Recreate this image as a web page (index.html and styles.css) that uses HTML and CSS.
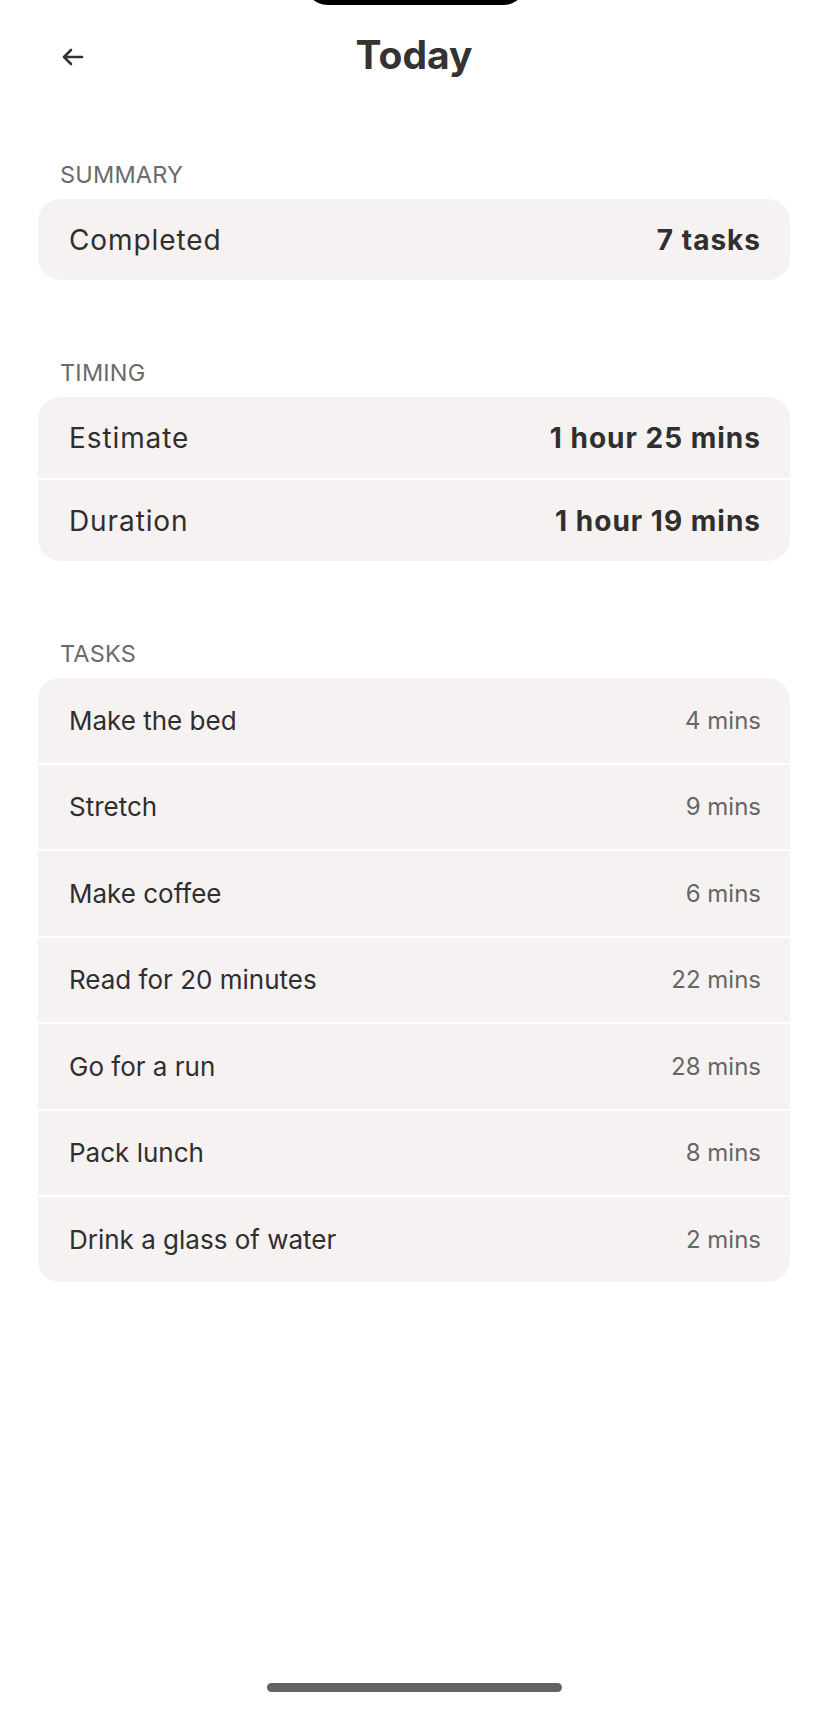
FILE: index.html
```html
<!DOCTYPE html>
<html lang="en">
<head>
  <meta charset="UTF-8" />
  <meta name="viewport" content="width=device-width, initial-scale=1.0"/>
  <title>Today</title>
  <link rel="stylesheet" href="styles.css">
</head>
<body>
  <div class="screen">
    <div class="notch"></div>

    <header class="topbar">
      <button class="back" aria-label="Back">
        <svg width="22" height="18" viewBox="0 0 22 18" fill="none" stroke="currentColor" stroke-width="2.6" stroke-linecap="round" stroke-linejoin="round">
          <path d="M20 9H3"/>
          <path d="M9 2L2 9l7 7"/>
        </svg>
      </button>
      <h1>Today</h1>
      <span></span>
    </header>

    <main class="content">
      <section class="group">
        <h2>Summary</h2>
        <div class="card">
          <div class="row">
            <span>Completed</span>
            <strong>7 tasks</strong>
          </div>
        </div>
      </section>

      <section class="group">
        <h2>Timing</h2>
        <div class="card">
          <div class="row">
            <span>Estimate</span>
            <strong>1 hour 25 mins</strong>
          </div>
          <div class="row">
            <span>Duration</span>
            <strong>1 hour 19 mins</strong>
          </div>
        </div>
      </section>

      <section class="group">
        <h2>Tasks</h2>
        <div class="card tasks">
          <div class="row"><span>Make the bed</span><em>4 mins</em></div>
          <div class="row"><span>Stretch</span><em>9 mins</em></div>
          <div class="row"><span>Make coffee</span><em>6 mins</em></div>
          <div class="row"><span>Read for 20 minutes</span><em>22 mins</em></div>
          <div class="row"><span>Go for a run</span><em>28 mins</em></div>
          <div class="row"><span>Pack lunch</span><em>8 mins</em></div>
          <div class="row"><span>Drink a glass of water</span><em>2 mins</em></div>
        </div>
      </section>
    </main>

    <div class="home-bar"></div>
  </div>
</body>
</html>
```

FILE: styles.css
```css
body {
  margin: 0;
  background-color: #fff;
  color: #2f2f2f;
  font-family: 'Inter', 'Noto Sans', sans-serif;
}
.screen {
  position: relative;
  min-height: 100vh;
  display: flex;
  flex-direction: column;
  overflow: hidden;
}
.notch {
  position: absolute;
  top: -40px;
  left: 305px;
  width: 221px;
  height: 45px;
  background-color: #000;
  border-radius: 24px;
}
.topbar {
  height: 108px;
  display: grid;
  grid-template-columns: 1fr auto 1fr;
  align-items: center;
  padding: 0 38px;
}
.topbar h1 {
  margin: 0;
  font-size: 39px;
  line-height: 1;
  font-weight: 700;
  color: #333;
}
.back {
  justify-self: start;
  margin: 6px 0 0 24px;
  padding: 0;
  border: none;
  background: none;
  color: #333;
  display: flex;
}
.content {
  flex: 1;
  padding: 55px 38px 0;
}
.group {
  margin-bottom: 81px;
}
.group h2 {
  margin: 0 0 13px 22px;
  font-size: 23.5px;
  line-height: 23px;
  font-weight: 400;
  letter-spacing: 0.2px;
  text-transform: uppercase;
  color: #6b6b6b;
}
.card {
  background-color: #f5f2f1;
  border-radius: 22px;
  overflow: hidden;
}
.row {
  height: 81px;
  display: flex;
  align-items: center;
  justify-content: space-between;
  padding: 0 29px 0 31px;
  font-size: 28px;
  letter-spacing: 0.9px;
}
.row + .row {
  border-top: 2px solid #fff;
}
.row strong {
  font-weight: 700;
  letter-spacing: 1px;
}
.tasks .row {
  height: 84.5px;
  font-size: 26px;
  letter-spacing: 0;
}
.tasks .row em {
  font-style: normal;
  font-size: 24px;
  color: #666;
}
.home-bar {
  align-self: center;
  width: 295px;
  height: 9px;
  margin-bottom: 17px;
  border-radius: 5px;
  background-color: #636363;
}
```
